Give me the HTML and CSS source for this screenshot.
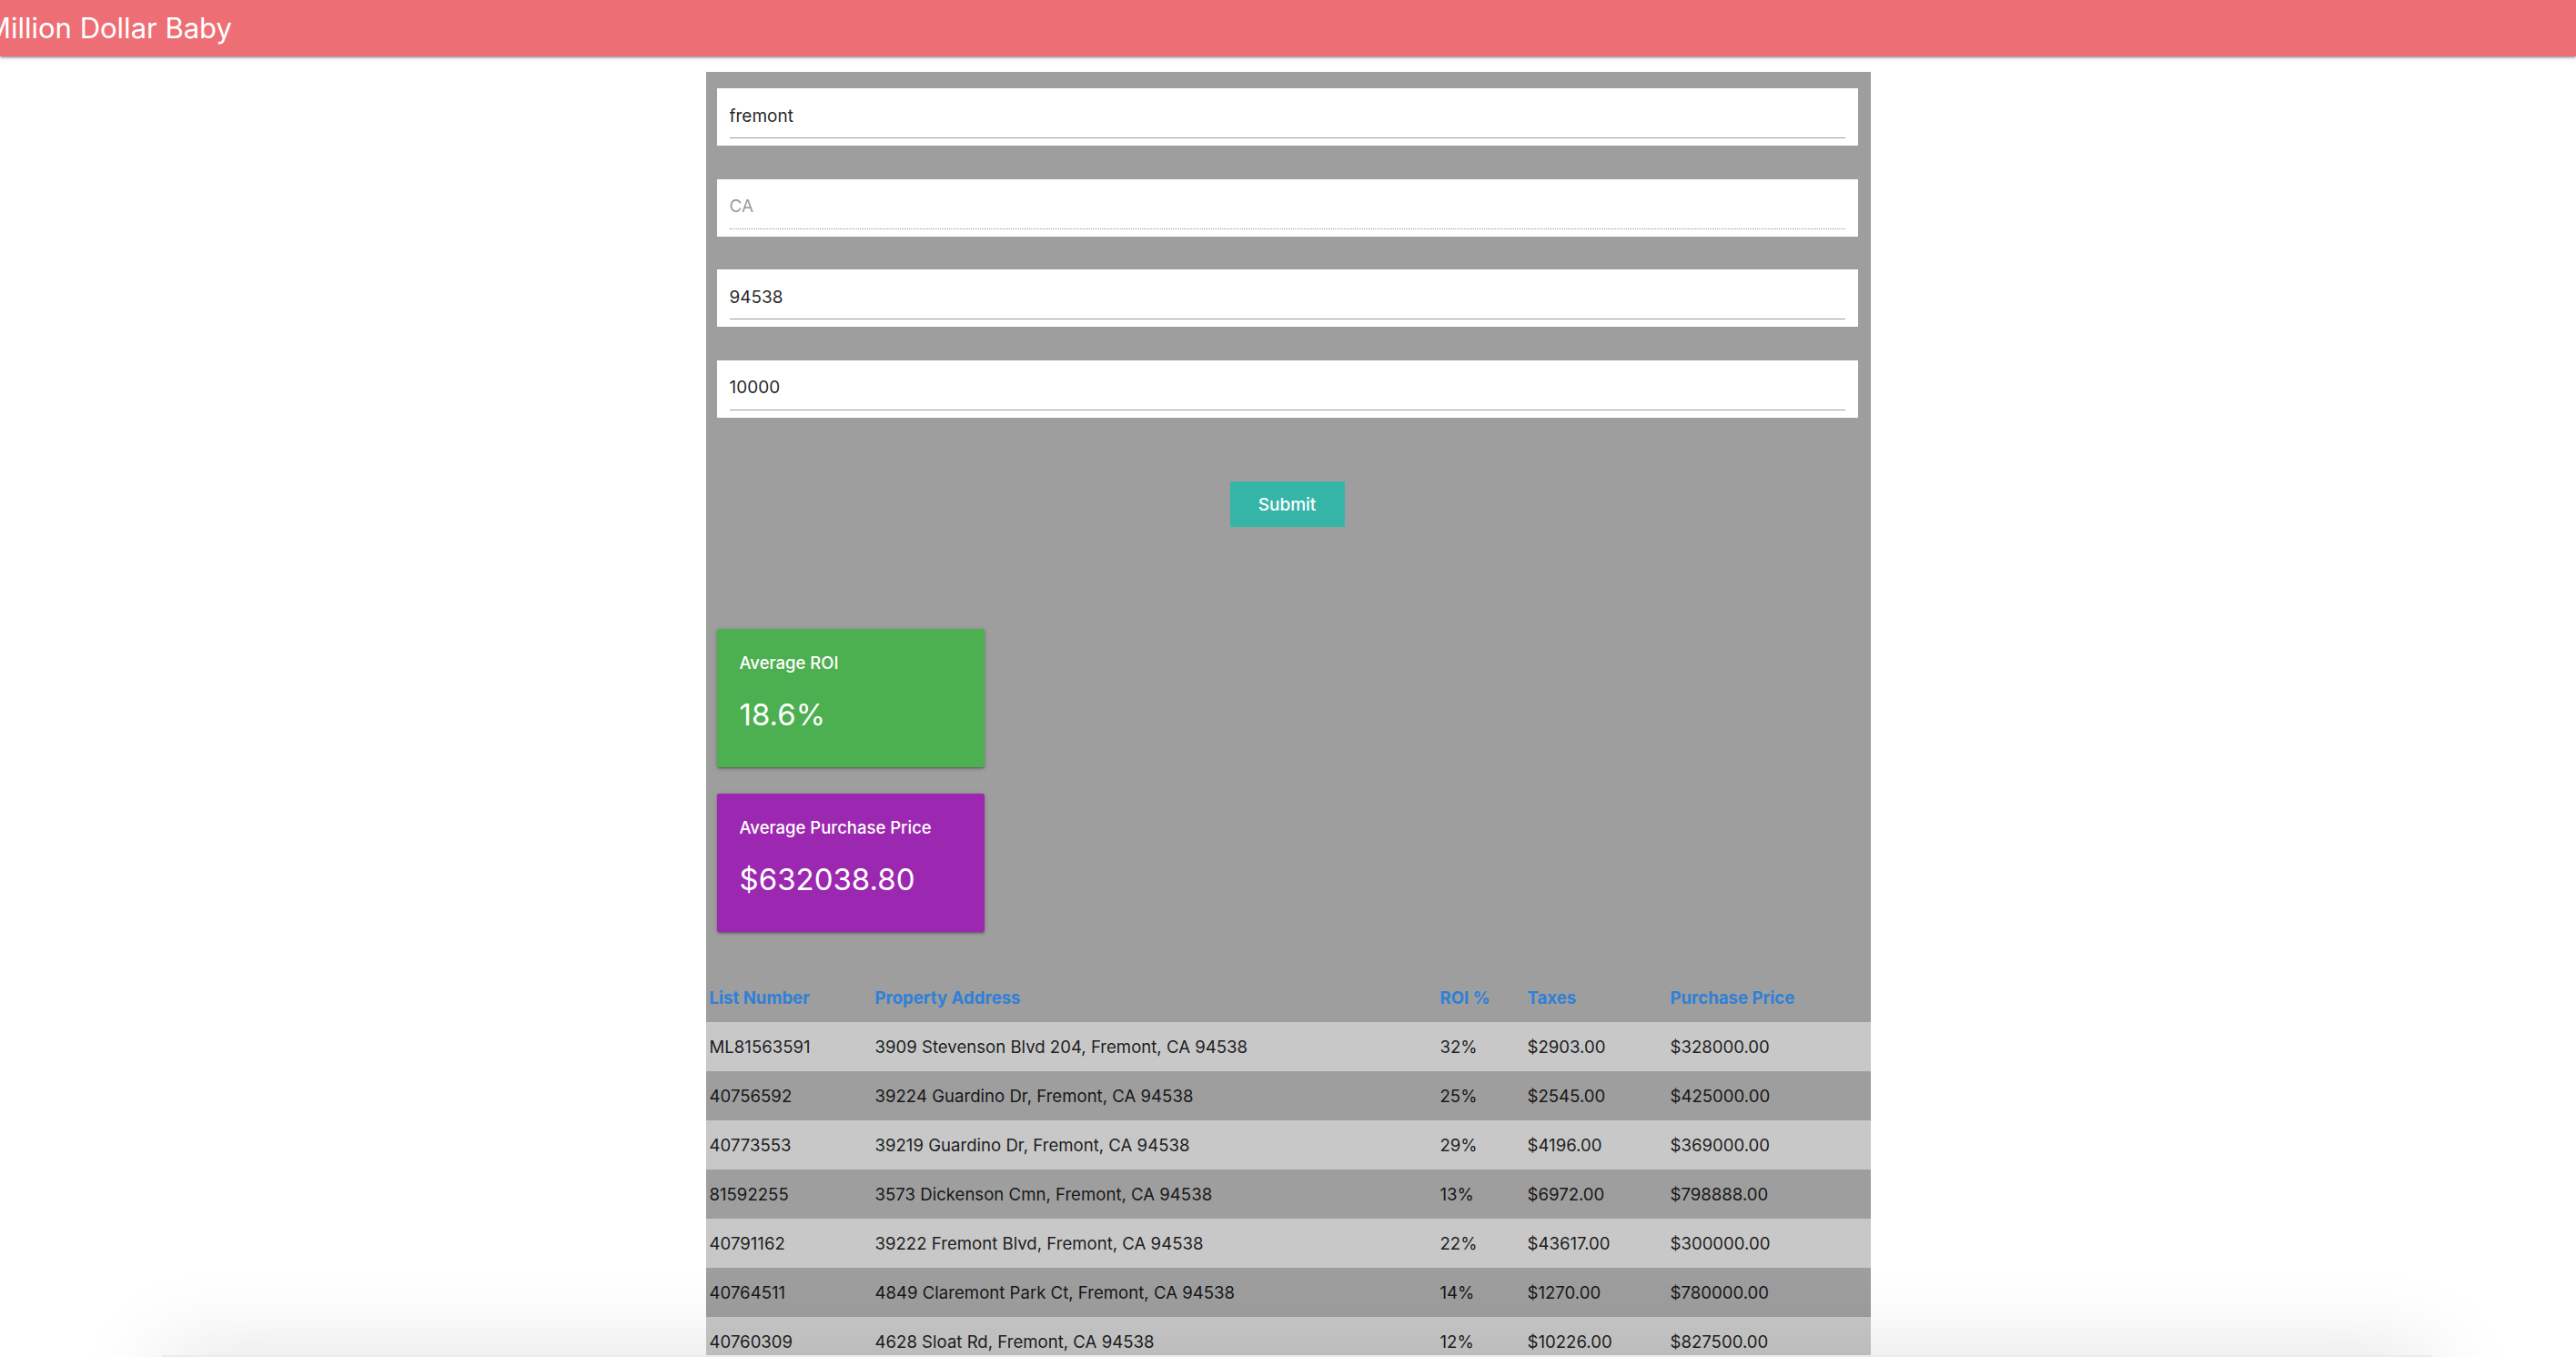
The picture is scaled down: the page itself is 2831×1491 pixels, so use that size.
FILE: index.html
```html
<!DOCTYPE html>
<html lang="en">
<head>
<meta charset="utf-8">
<title>Million Dollar Baby</title>
<link rel="stylesheet" href="styles.css">
</head>
<body>
<header class="topbar">
  <div class="brand">Million Dollar Baby</div>
</header>

<main class="panel">
  <div class="inner">
    <form class="search">
      <div class="field"><input class="input" type="text" value="fremont"></div>
      <div class="field"><input class="input" type="text" value="CA" disabled></div>
      <div class="field"><input class="input" type="text" value="94538"></div>
      <div class="field"><input class="input" type="text" value="10000"></div>
      <div class="actions"><button class="submit" type="button">Submit</button></div>
    </form>

    <section class="cards">
      <div class="card card-green">
        <div class="card-title">Average ROI</div>
        <div class="card-value">18.6%</div>
      </div>
      <div class="card card-purple">
        <div class="card-title">Average Purchase Price</div>
        <div class="card-value">$632038.80</div>
      </div>
    </section>
  </div>

  <table class="results">
    <colgroup>
      <col class="c-list">
      <col class="c-addr">
      <col class="c-roi">
      <col class="c-tax">
      <col class="c-price">
    </colgroup>
    <thead>
      <tr><th>List Number</th><th>Property Address</th><th>ROI %</th><th>Taxes</th><th>Purchase Price</th></tr>
    </thead>
    <tbody>
      <tr><td>ML81563591</td><td>3909 Stevenson Blvd 204, Fremont, CA 94538</td><td>32%</td><td>$2903.00</td><td>$328000.00</td></tr>
      <tr><td>40756592</td><td>39224 Guardino Dr, Fremont, CA 94538</td><td>25%</td><td>$2545.00</td><td>$425000.00</td></tr>
      <tr><td>40773553</td><td>39219 Guardino Dr, Fremont, CA 94538</td><td>29%</td><td>$4196.00</td><td>$369000.00</td></tr>
      <tr><td>81592255</td><td>3573 Dickenson Cmn, Fremont, CA 94538</td><td>13%</td><td>$6972.00</td><td>$798888.00</td></tr>
      <tr><td>40791162</td><td>39222 Fremont Blvd, Fremont, CA 94538</td><td>22%</td><td>$43617.00</td><td>$300000.00</td></tr>
      <tr><td>40764511</td><td>4849 Claremont Park Ct, Fremont, CA 94538</td><td>14%</td><td>$1270.00</td><td>$780000.00</td></tr>
      <tr><td>40760309</td><td>4628 Sloat Rd, Fremont, CA 94538</td><td>12%</td><td>$10226.00</td><td>$827500.00</td></tr>
    </tbody>
  </table>
</main>

<div class="bottom-shade"></div>
</body>
</html>
```

FILE: styles.css
```css
* { box-sizing: border-box; }

html, body { margin: 0; padding: 0; }

body {
  background: #ffffff;
  font-family: Inter, "Noto Sans", "Liberation Sans", sans-serif;
  color: rgba(0, 0, 0, 0.87);
}

/* ---------- top bar ---------- */
.topbar {
  position: relative;
  z-index: 2;
  height: 62px;
  display: flex;
  align-items: center;
  overflow: hidden;
  background: #ed6f75;
  box-shadow: 0 2px 2px 0 rgba(0,0,0,.14), 0 3px 1px -2px rgba(0,0,0,.12), 0 1px 5px 0 rgba(0,0,0,.2);
}

.brand {
  margin-left: -16px;
  font-size: 31px;
  line-height: 62px;
  font-weight: 400;
  color: #ffffff;
  white-space: nowrap;
}

/* ---------- grey panel ---------- */
.panel {
  width: 1280px;
  margin: 17px auto 0;
  padding-top: 18px;
  background: #9e9e9e;
}

.inner {
  padding: 0 14px 0 12px;
}

.field {
  background: #ffffff;
  padding: 6px 14px 8px;
  margin-bottom: 36.5px;
}

.input {
  display: block;
  width: 100%;
  height: 49px;
  padding: 0;
  border: 0;
  border-bottom: 1px solid #9e9e9e;
  background: transparent;
  font-family: Inter, "Noto Sans", sans-serif;
  font-size: 19px;
  color: rgba(0, 0, 0, 0.87);
  outline: none;
}

.input:disabled {
  border-bottom: 1px dotted rgba(0, 0, 0, 0.42);
  color: rgba(0, 0, 0, 0.42);
}

.actions {
  padding-top: 34px;
  display: flex;
  justify-content: center;
}

.submit {
  width: 126px;
  height: 50px;
  border: 0;
  border-radius: 0;
  background: #35b5a8;
  color: #ffffff;
  font-family: Inter, "Noto Sans", sans-serif;
  font-size: 19px;
  font-weight: 500;
  cursor: pointer;
}

/* ---------- stat cards ---------- */
.cards {
  margin-top: 112px;
  display: flex;
  flex-direction: column;
  align-items: flex-start;
  gap: 28.5px;
}

.card {
  width: 294px;
  height: 152px;
  padding: 25px 25px 0;
  color: #ffffff;
  border-radius: 2px;
  box-shadow: 0 2px 2px 0 rgba(0,0,0,.14), 0 3px 1px -2px rgba(0,0,0,.12), 0 1px 5px 0 rgba(0,0,0,.2);
}

.card-green { background: #4caf50; }
.card-purple { background: #9c27b0; }

.card-title {
  font-size: 18.5px;
  line-height: 24px;
  font-weight: 500;
}

.card-value {
  margin-top: 24px;
  font-size: 33px;
  line-height: 42px;
  font-weight: 400;
}

/* ---------- results table ---------- */
.results {
  width: 100%;
  margin-top: 45px;
  border-collapse: collapse;
  table-layout: fixed;
}

.c-list { width: 182px; }
.c-addr { width: 621px; }
.c-roi { width: 96px; }
.c-tax { width: 157px; }
.c-price { width: 224px; }

.results th,
.results td {
  padding: 15px 4px;
  font-size: 18.6px;
  line-height: 24px;
  text-align: left;
  white-space: nowrap;
}

.results th {
  color: #2f80d8;
  font-weight: 700;
}

.results td {
  color: rgba(0, 0, 0, 0.87);
}

.results tbody tr:nth-child(odd) {
  background: rgba(242, 242, 242, 0.5);
}

/* ---------- soft shade at the bottom edge ---------- */
.bottom-shade {
  position: fixed;
  left: 178px;
  top: 1489px;
  width: 2495px;
  height: 80px;
  background: #ececec;
  box-shadow: 0 0 100px rgba(0, 0, 0, 0.13);
  pointer-events: none;
}
```
